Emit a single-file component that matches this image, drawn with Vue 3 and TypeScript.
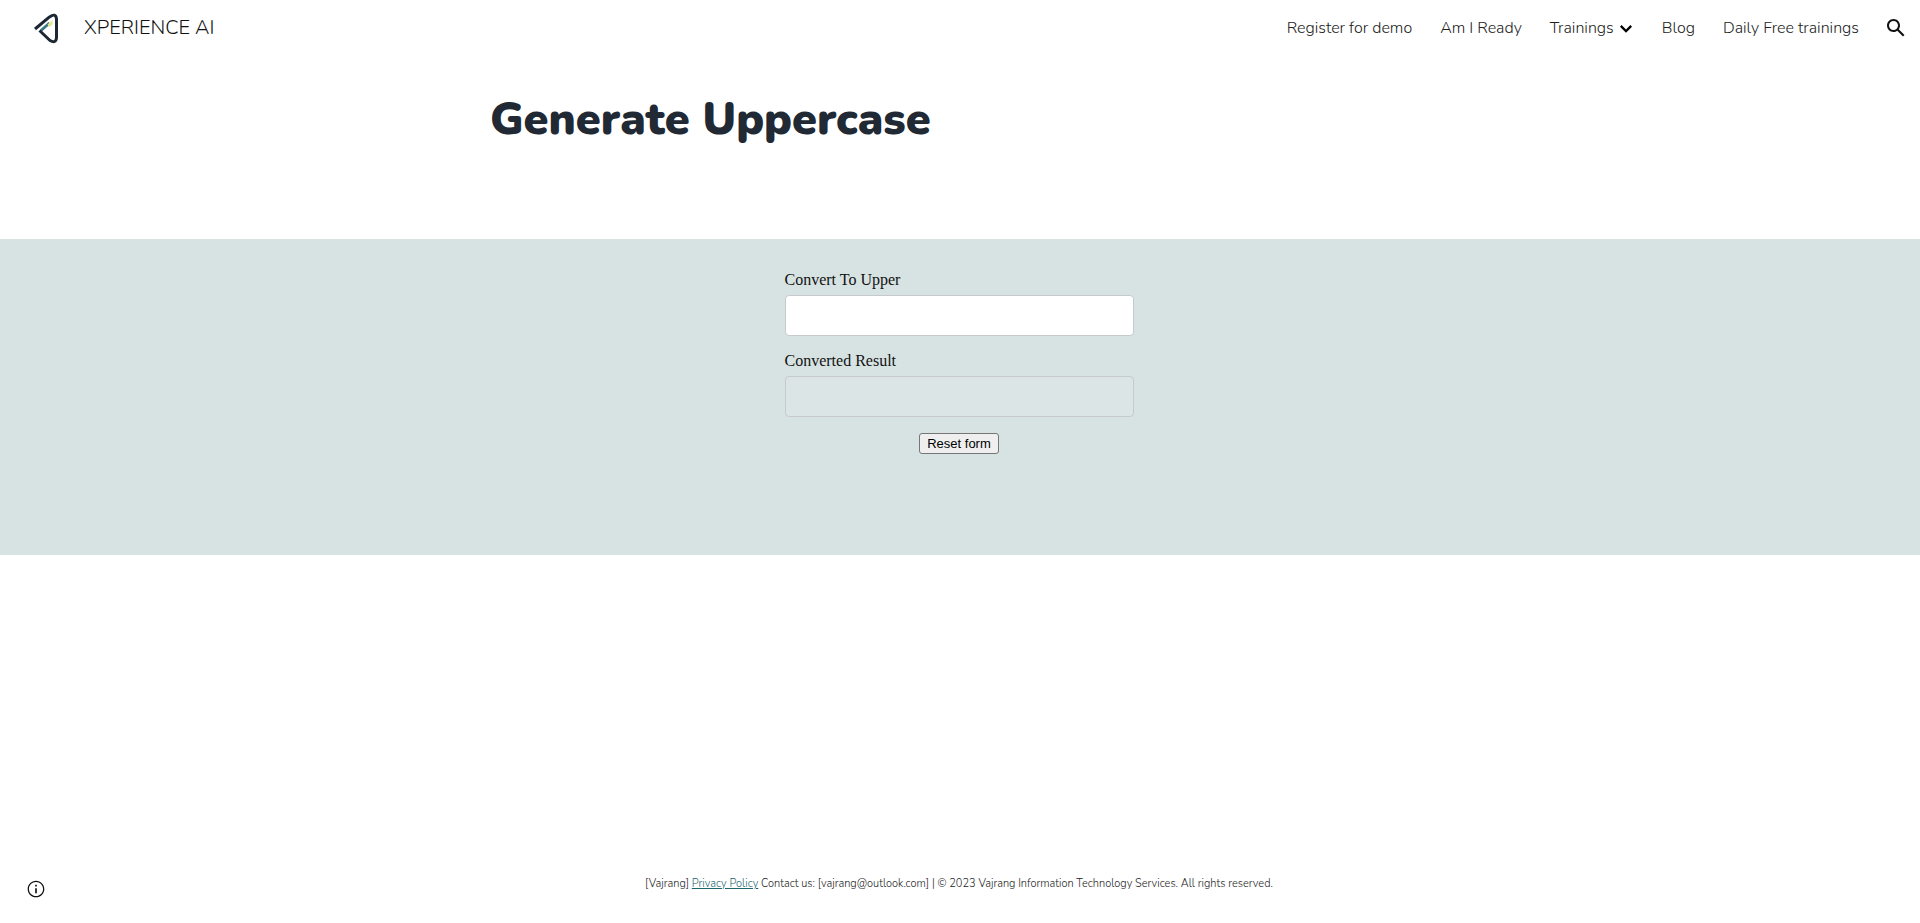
<script setup lang="ts">
import { computed, ref } from 'vue'

interface NavItem {
  label: string
  hasMenu?: boolean
}

const navItems: NavItem[] = [
  { label: 'Register for demo' },
  { label: 'Am I Ready' },
  { label: 'Trainings', hasMenu: true },
  { label: 'Blog' },
  { label: 'Daily Free trainings' },
]

const source = ref('')
const result = computed(() => source.value.toUpperCase())

function reset(): void {
  source.value = ''
}
</script>

<template>
  <div class="page">
    <header class="topbar">
      <a class="brand" href="#">
        <svg class="logo" viewBox="0 0 32 32" aria-hidden="true">
          <path d="M9 18.500 17.500 11" stroke="#397a86" stroke-width="3" fill="none" />
          <path d="M15.500 12.500 20.500 8v4.500l-3 2.500z" fill="#e3e98f" />
          <path
            d="M3 17 17.500 4.900Q24 0.500 24.500 7V25.500Q24 32 18 28.500L7.500 18.500"
            stroke="#1d2733"
            stroke-width="3"
            stroke-linejoin="round"
            fill="none"
          />
        </svg>
        <span>XPERIENCE AI</span>
      </a>
      <div class="actions">
        <nav class="nav">
          <a v-for="item in navItems" :key="item.label" class="nav-link" href="#">
            {{ item.label }}
            <svg v-if="item.hasMenu" class="chevron" viewBox="0 0 24 24" aria-hidden="true">
              <path d="M5.400 7.600 12 14.200l6.600-6.600L21 10l-9 9-9-9z" />
            </svg>
          </a>
        </nav>
        <button class="search" type="button" aria-label="Search">
          <svg viewBox="0 0 24 24" aria-hidden="true">
            <path
              d="M20.490 19l-5.730-5.730C15.530 12.200 16 10.910 16 9.500 16 5.910 13.090 3 9.500 3S3 5.910 3 9.500 5.910 16 9.500 16c1.410 0 2.700-.470 3.770-1.240L19 20.490 20.490 19zM5 9.500C5 7.010 7.010 5 9.500 5S14 7.010 14 9.500 11.990 14 9.500 14 5 11.990 5 9.500z"
            />
          </svg>
        </button>
      </div>
    </header>

    <main>
      <section class="hero">
        <h1>Generate Uppercase</h1>
      </section>
      <section class="tool">
        <form class="form" @submit.prevent @reset.prevent="reset">
          <label for="source">Convert To Upper</label>
          <input id="source" v-model="source" type="text" />
          <label for="result">Converted Result</label>
          <input id="result" :value="result" type="text" disabled />
          <button class="reset" type="reset">Reset form</button>
        </form>
      </section>
    </main>

    <footer class="footer">
      <p>
        [Vajrang] <a href="#">Privacy Policy</a> Contact us: [vajrang@outlook.com] | © 2023
        Vajrang Information Technology Services. All rights reserved.
      </p>
      <button class="info" type="button" aria-label="Site information">
        <svg viewBox="0 0 24 24" aria-hidden="true">
          <path
            d="M11 17h2v-6h-2v6zm1-15C6.480 2 2 6.480 2 12s4.480 10 10 10 10-4.480 10-10S17.520 2 12 2zm0 18.500c-4.690 0-8.500-3.810-8.500-8.500s3.810-8.500 8.500-8.500 8.500 3.810 8.500 8.500-3.810 8.500-8.500 8.500zM11 9h2V7h-2v2z"
          />
        </svg>
      </button>
    </footer>
  </div>
</template>

<style>
body {
  margin: 0;
  background: #fff;
}
</style>

<style scoped>
.page {
  display: flex;
  flex-direction: column;
  min-height: 100vh;
  font-family: Nunito, 'Open Sans', sans-serif;
  color: #212934;
}

.topbar {
  display: flex;
  align-items: center;
  justify-content: space-between;
  height: 56px;
  padding: 0 12px 0 32px;
}

.brand {
  display: flex;
  align-items: center;
  gap: 20px;
  color: #111;
  font-size: 20px;
  font-weight: 300;
  line-height: 24px;
  text-decoration: none;
}

.logo {
  width: 32px;
  height: 32px;
}

.actions {
  display: flex;
  align-items: center;
  gap: 25px;
}

.nav {
  display: flex;
  align-items: center;
  gap: 28px;
}

.nav-link {
  display: flex;
  align-items: center;
  gap: 4px;
  color: #222;
  font-size: 16px;
  font-weight: 300;
  line-height: 24px;
  text-decoration: none;
  white-space: nowrap;
}

.chevron {
  width: 16px;
  height: 16px;
}

.search,
.info {
  display: flex;
  padding: 0;
  border: 0;
  background: none;
  cursor: pointer;
}

.search svg {
  width: 24px;
  height: 24px;
  fill: #111;
}

.hero {
  box-sizing: border-box;
  width: 100%;
  max-width: 1280px;
  min-height: 183px;
  margin: 0 auto;
  padding: 34px 170px;
}

h1 {
  margin: 0;
  font-size: 45px;
  font-weight: 900;
  line-height: 60px;
}

.tool {
  box-sizing: border-box;
  min-height: 316px;
  padding: 30px 18px 30px 16px;
  background: #d7e3e2;
}

.form {
  display: flex;
  flex-direction: column;
  width: 100%;
  max-width: 349px;
  margin: 0 auto;
}

.form label {
  color: #111;
  font-family: 'Liberation Serif', serif;
  font-size: 16px;
  line-height: 22px;
}

.form input {
  box-sizing: border-box;
  width: 100%;
  height: 41px;
  margin: 4px 0 14px;
  padding: 0 12px;
  border: 1px solid #c6cacd;
  border-radius: 4px;
  background: #fff;
  font-size: 16px;
}

.form input:disabled {
  background: #dce5e6;
}

.reset {
  align-self: center;
  height: 21px;
  margin-top: 2px;
  padding: 0 7px;
  border: 1px solid #767676;
  border-radius: 3px;
  background: #efefef;
  color: #000;
  font-family: 'Liberation Sans', sans-serif;
  font-size: 13px;
}

.footer {
  position: relative;
  margin-top: auto;
  padding: 0 66px 31px 64px;
  color: #222;
  font-size: 11px;
  font-weight: 300;
  line-height: 16px;
  text-align: center;
}

.footer p {
  margin: 0;
}

.footer a {
  color: #1c6670;
}

.info {
  position: absolute;
  bottom: 24px;
  left: 26px;
}

.info svg {
  width: 20px;
  height: 20px;
  fill: #111;
}
</style>
